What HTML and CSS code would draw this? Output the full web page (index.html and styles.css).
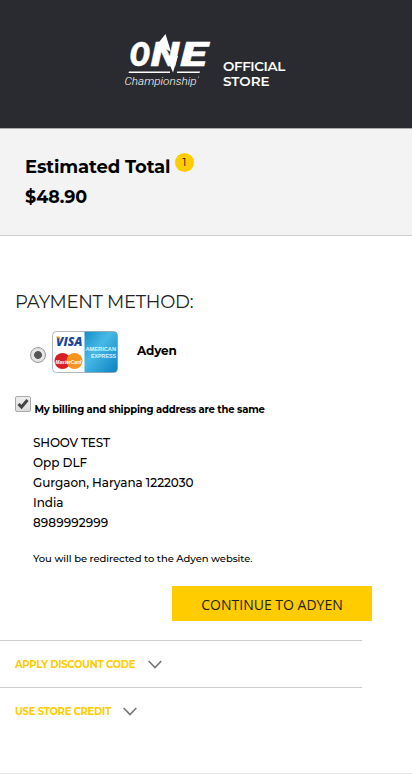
FILE: index.html
```html
<!DOCTYPE html>
<html lang="en">
<head>
<meta charset="utf-8">
<meta name="viewport" content="width=device-width, initial-scale=1">
<title>Checkout</title>
<link rel="stylesheet" href="styles.css">
</head>
<body>
<header class="header">
  <svg class="logo" width="90" height="58" viewBox="0 0 90 58">
    <g fill="#fff">
      <text class="logo-one" x="6.500" y="31.500" textLength="20.500" lengthAdjust="spacingAndGlyphs">O</text>
      <text class="logo-one" x="28" y="31.500" textLength="28" lengthAdjust="spacingAndGlyphs">N</text>
      <text class="logo-one" x="57.500" y="31.500" textLength="26.500" lengthAdjust="spacingAndGlyphs">E</text>
      <path d="M34.500 10 42.500 0 48 18ZM43 22 50 38.500 55 22Z"/>
      <path d="M6 37.500H47V39H5.500ZM54 37.500H77L76.500 39H54Z"/>
      <text class="logo-sub" x="1.500" y="50.500" textLength="72" lengthAdjust="spacingAndGlyphs">Championship</text>
      <circle cx="75.500" cy="43" r=".5"/>
    </g>
  </svg>
  <div class="store"><span class="official">OFFICIAL</span><br>STORE</div>
</header>
<section class="total">
  <div class="total-row"><h2 class="total-title">Estimated Total</h2><span class="badge">1</span></div>
  <div class="price">$48.90</div>
</section>
<main class="payment">
  <h1 class="heading">PAYMENT METHOD:</h1>
  <label class="method">
    <span class="radio"></span>
    <svg class="cards" width="66" height="42" viewBox="0 0 66 42">
      <defs>
        <linearGradient id="blue" x1="0" y1="0" x2="1" y2="1"><stop offset="0" stop-color="#138fca"/><stop offset=".4" stop-color="#48b9e6"/><stop offset="1" stop-color="#087fc0"/></linearGradient>
        <clipPath id="round"><rect x=".5" y=".5" width="65" height="41" rx="4"/></clipPath>
      </defs>
      <g clip-path="url(#round)">
        <rect width="66" height="42" fill="#fff"/>
        <rect x="32.500" width="33.500" height="42" fill="url(#blue)"/>
        <text class="visa" x="4" y="15" textLength="26.500" lengthAdjust="spacingAndGlyphs">VISA</text>
        <path d="M3.500 5.500H7.500L9 10.500Q7 7 3.500 5.500Z" fill="#f4a51c"/>
        <circle cx="10.500" cy="30" r="8" fill="#d71f28"/>
        <circle cx="22.500" cy="30" r="8" fill="#f5951f"/>
        <text class="master" x="3.500" y="32.500" textLength="26" lengthAdjust="spacingAndGlyphs">MasterCard</text>
        <text class="amex" x="33.500" y="19.500" textLength="30.500" lengthAdjust="spacingAndGlyphs">AMERICAN</text>
        <text class="amex" x="39" y="26.500" textLength="25" lengthAdjust="spacingAndGlyphs">EXPRESS</text>
      </g>
      <rect x=".5" y=".5" width="65" height="41" rx="4" fill="none" stroke="#8b9499" stroke-opacity=".65"/>
    </svg>
    <span class="method-name">Adyen</span>
  </label>
  <label class="same">
    <span class="check"><svg width="14" height="14" viewBox="0 0 14 14"><path d="M2.500 7 5.500 10 11.500 3" fill="none" stroke="#444" stroke-width="3"/></svg></span>
    <span class="same-text">My billing and shipping address are the same</span>
  </label>
  <address class="address">
    <span class="person">SHOOV TEST</span>
    <span>Opp DLF</span>
    <span>Gurgaon, Haryana 1222030</span>
    <span>India</span>
    <span class="phone">8989992999</span>
  </address>
  <p class="note">You will be redirected to the Adyen website.</p>
  <button class="continue">CONTINUE TO ADYEN</button>
</main>
<section class="options">
  <div class="option"><span>APPLY DISCOUNT CODE</span><svg width="14" height="9" viewBox="0 0 14 9"><path d="M.7 1 7 7.500 13.300 1"/></svg></div>
  <div class="option"><span>USE STORE CREDIT</span><svg width="14" height="9" viewBox="0 0 14 9"><path d="M.7 1 7 7.500 13.300 1"/></svg></div>
</section>
<footer class="footer"></footer>
</body>
</html>
```
FILE: styles.css
```css
* { box-sizing: border-box; }
body {
  margin: 0;
  background: #fff;
  color: #000;
  font-family: Montserrat, Inter, sans-serif;
  white-space: nowrap;
  height: 774px;
  overflow: hidden;
}
h1, h2, p { margin: 0; }
.header {
  height: 129px;
  background: #2a2b30;
  border-bottom: 1px solid #aaabad;
  display: flex;
  align-items: flex-start;
  padding: 34px 0 0 123px;
}
.logo { flex: none; overflow: visible; }
.logo-one { font: italic 900 34px Roboto, sans-serif; stroke: #fff; stroke-width: .5; }
.logo-sub { font: italic 300 11.5px Roboto, sans-serif; }
.store {
  margin: 25px 0 0 10px;
  color: #fff;
  font-size: 13.5px;
  font-weight: 600;
  line-height: 15px;
}
.official { letter-spacing: -.4px; }
.total {
  height: 107px;
  padding: 22px 25px 0;
  background: #f3f3f3;
  border-bottom: 1px solid #cfcfcf;
}
.total-row { display: flex; height: 30px; }
.total-title { width: 145px; font-size: 18px; font-weight: 700; line-height: 33px; letter-spacing: -.12px; }
.badge {
  width: 19px;
  height: 19px;
  margin: 2px 0 0 5px;
  border-radius: 50%;
  background: #fc0;
  font-size: 10.5px;
  line-height: 20px;
  text-align: center;
}
.price { font-size: 17.5px; font-weight: 700; line-height: 31px; letter-spacing: -.15px; }
.payment { height: 404px; padding: 51px 0 0 15px; }
.heading { font-size: 18px; font-weight: 400; line-height: 31px; letter-spacing: -.27px; color: #222; }
.method { display: flex; height: 42px; margin-top: 13px; padding-left: 15px; }
.radio {
  width: 16px;
  height: 16px;
  margin: 16px 6px 0 0;
  border: 1px solid #999;
  border-radius: 50%;
  background: radial-gradient(circle, #555 0 3.5px, #e5e5e5 4.3px);
}
.method-name { margin-left: 19px; font-size: 12px; font-weight: 700; line-height: 40px; letter-spacing: -.15px; }
.same { display: flex; margin-top: 23px; height: 20px; }
.check {
  width: 16px;
  height: 16px;
  border: 1px solid #aaa;
  border-radius: 2px;
  background: linear-gradient(#eee, #ddd);
}
.check svg { display: block; }
.same-text { margin: 6px 0 0 3.5px; font-size: 10px; font-weight: 700; line-height: 16px; letter-spacing: -.18px; }
.address {
  margin: 17px 0 0 18px;
  display: flex;
  flex-direction: column;
  align-items: flex-start;
  font-size: 12px;
  font-style: normal;
  font-weight: 500;
  line-height: 20px;
  letter-spacing: -.03px;
}
.person { letter-spacing: -.15px; }
.phone { letter-spacing: .1px; }
.note { margin: 16px 0 0 18px; font-size: 10px; font-weight: 500; line-height: 20px; letter-spacing: -.065px; }
.continue {
  display: block;
  width: 200px;
  height: 35px;
  margin: 17px 0 0 157px;
  padding: 2px 0 0;
  border: 0;
  background: #fc0;
  color: #222;
  font: 14px "Open Sans", sans-serif;
}
.options { width: 362px; }
.option {
  height: 47px;
  padding-left: 15px;
  border-top: 1px solid #ccc;
  display: flex;
  align-items: center;
  gap: 12.5px;
  color: #fc0;
  font-size: 10px;
  font-weight: 700;
  letter-spacing: -.29px;
}
.option svg { fill: none; stroke: #777; stroke-width: 1.7; }
.footer { margin-top: 39px; border-top: 1px solid #e8e8e8; }
.visa { font: italic 900 13px "Open Sans", sans-serif; fill: #20459b; }
.master { font: italic 700 6px "Liberation Sans", sans-serif; fill: #fff; }
.amex { font: 700 6px "Liberation Sans", sans-serif; fill: #dff4ff; }
```
